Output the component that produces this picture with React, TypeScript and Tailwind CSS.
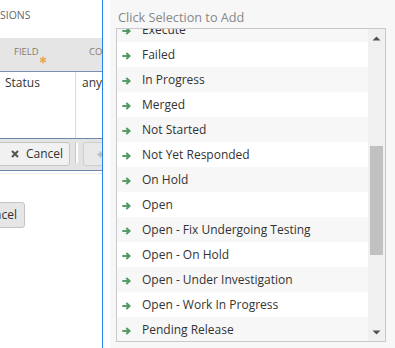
import React from "react";

const items = [
  "Execute",
  "Failed",
  "In Progress",
  "Merged",
  "Not Started",
  "Not Yet Responded",
  "On Hold",
  "Open",
  "Open - Fix Undergoing Testing",
  "Open - On Hold",
  "Open - Under Investigation",
  "Open - Work In Progress",
  "Pending Release",
];

function Arrow() {
  return (
    <svg width="9" height="8" viewBox="0 0 9 8" className="shrink-0 mt-[3px]">
      <path d="M0.3 4H7.2" stroke="#4f985f" strokeWidth="1.9" fill="none" />
      <path d="M4.3 1L7.6 4L4.3 7" stroke="#4f985f" strokeWidth="1.9" fill="none" strokeLinejoin="miter" />
    </svg>
  );
}

export default function App() {
  return (
    <div className="w-[395px] h-[348px] flex bg-white overflow-hidden font-['Open_Sans',sans-serif]">
      {/* left panel */}
      <div className="w-[102px] shrink-0 overflow-hidden flex flex-col">
        <div className="h-[38px] pt-[8px] text-[10.5px] leading-[14px] text-[#666]">SIONS</div>
        <div className="h-[34px] bg-[#e5e5e5] border-b border-[#7b8fae] flex shrink-0">
          <div className="w-[76px] shrink-0 relative">
            <span className="absolute left-[14px] top-[8px] text-[9.5px] leading-[12px] text-[#8a7b6d]">FIELD</span>
            <svg width="8" height="8" viewBox="0 0 8 8" className="absolute left-[39px] top-[18px]">
              <path d="M4 0.5V7.5M1 2.2L7 5.8M7 2.2L1 5.8" stroke="#e9a348" strokeWidth="1.4" />
            </svg>
          </div>
          <div className="pl-[13px] pt-[8px] text-[9.5px] leading-[12px] text-[#8a7b6d] whitespace-nowrap">CO</div>
        </div>
        <div className="h-[66px] flex shrink-0">
          <div className="w-[76px] shrink-0 border-r border-[#dcdcdc] pl-[5px] pt-[3px] text-[12px] leading-[16px] text-[#333]">Status</div>
          <div className="pl-[6px] pt-[3px] text-[12px] leading-[16px] text-[#333] whitespace-nowrap">any</div>
        </div>
        <div className="h-[33px] shrink-0 border-y border-[#6f87ab] bg-[#e3e3e3] flex items-start pt-[3px]">
          <div className="ml-[-3px] w-[73px] h-[24px] shrink-0 rounded-[3px] border border-[#c6c6c6] bg-[#f1f1f1] flex items-center pl-[13px]">
            <svg width="8" height="8" viewBox="0 0 8 8" className="shrink-0">
              <path d="M1 1L7 7M7 1L1 7" stroke="#555" strokeWidth="2.1" />
            </svg>
            <span className="ml-[7px] text-[12px] leading-[16px] text-[#333]">Cancel</span>
          </div>
          <div className="ml-[5px] mt-[1px] h-[20px] w-px bg-[#c4c4c4] shrink-0" />
          <div className="mt-[1px] h-[20px] w-[2px] bg-white shrink-0" />
          <div className="ml-[5px] w-[40px] h-[24px] shrink-0 rounded-[3px] border border-[#cfcfcf] bg-[#e9e9e9] flex items-center pl-[13px]">
            <svg width="7" height="7" viewBox="0 0 7 7" className="shrink-0">
              <path d="M3.5 0.5V6.5M0.5 3.5H6.5" stroke="#b9b9b9" strokeWidth="1.8" />
            </svg>
          </div>
        </div>
        <div className="h-[3px] shrink-0 border-b border-[#ececec]" />
        <div className="h-[28px] shrink-0" />
        <div className="ml-[-20px] w-[45px] h-[26px] shrink-0 rounded-[3px] border border-[#c4c4c4] bg-[#e6e6e6] flex items-center justify-end pr-[7px]">
          <span className="text-[12px] leading-[16px] text-[#333] whitespace-nowrap">Cancel</span>
        </div>
      </div>

      {/* divider */}
      <div className="w-px shrink-0 bg-[#2683ec]" />

      {/* right panel */}
      <div className="flex-1 flex bg-[#f7f7f7]">
        <div className="w-[7px] shrink-0 bg-white" />
        <div className="pl-[6px] flex flex-col">
          <div className="pt-[8px] pl-[2px] h-[28px] text-[12.7px] leading-[18px] text-[#888] whitespace-nowrap">
            Click Selection to Add
          </div>
          <div className="w-[270px] h-[314px] border border-[#c9c9c9] bg-white flex overflow-hidden">
            <div className="flex-1 overflow-hidden">
              <div className="mt-[-12px]">
                {items.map((it, i) => (
                  <div
                    key={it}
                    className={
                      "h-[25px] flex items-center pl-[5px] " +
                      (i % 2 === 0 ? "bg-[#f7f7f7]" : "bg-white")
                    }
                  >
                    <Arrow />
                    <span className="ml-[11px] text-[12px] leading-[16px] text-[#333] whitespace-nowrap">{it}</span>
                  </div>
                ))}
              </div>
            </div>
            <div className="w-[17px] shrink-0 bg-[#f0f0f0] relative">
              <svg width="9" height="5" viewBox="0 0 9 5" className="absolute left-[4px] top-[7px]">
                <path d="M0.5 4.5L4.5 0.5L8.5 4.5Z" fill="#505050" />
              </svg>
              <div className="absolute left-[2px] top-[117px] w-[13px] h-[109px] bg-[#c1c1c1]" />
              <svg width="9" height="5" viewBox="0 0 9 5" className="absolute left-[4px] top-[301px]">
                <path d="M0.5 0.5L4.5 4.5L8.5 0.5Z" fill="#505050" />
              </svg>
            </div>
          </div>
        </div>
      </div>
    </div>
  );
}
